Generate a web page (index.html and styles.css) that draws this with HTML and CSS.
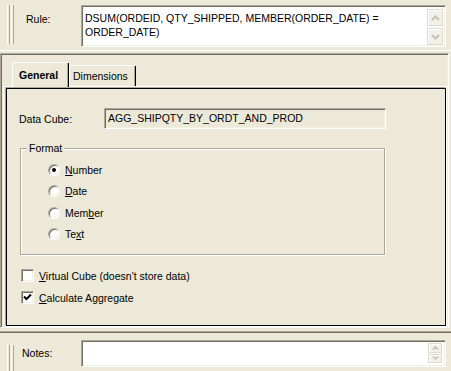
FILE: index.html
```html
<!DOCTYPE html>
<html lang="en">
<head>
    <meta charset="UTF-8">
    <title>Rule</title>
    <link rel="stylesheet" href="styles.css">
</head>
<body>
    <div class="rule-bar">
        <div class="grip"><span></span><span></span></div>
        <div class="bar-label">Rule:</div>
        <div class="memo">
            <div class="memo-text">DSUM(ORDEID, QTY_SHIPPED, MEMBER(ORDER_DATE) = ORDER_DATE)</div>
            <div class="vscroll">
                <div class="sbtn">
                    <svg width="9" height="6" viewBox="0 0 9 6"><path d="M1 5 L4.5 1.5 L8 5" fill="none" stroke="#c6c3b4" stroke-width="2"/></svg>
                </div>
                <div class="sbtn">
                    <svg width="9" height="6" viewBox="0 0 9 6"><path d="M1 1 L4.5 4.5 L8 1" fill="none" stroke="#c6c3b4" stroke-width="2"/></svg>
                </div>
            </div>
        </div>
    </div>

    <div class="main-panel">
        <div class="tabs">
            <div class="tab active">General</div>
            <div class="tab">Dimensions</div>
        </div>
        <div class="tab-page">
            <div class="frame">
                <div class="field-row">
                    <div class="field-label">Data Cube:</div>
                    <div class="readonly-box">AGG_SHIPQTY_BY_ORDT_AND_PROD</div>
                </div>

                <div class="groupbox">
                    <div class="legend">Format</div>
                    <div class="option"><span class="radio checked"></span><span><u>N</u>umber</span></div>
                    <div class="option"><span class="radio"></span><span><u>D</u>ate</span></div>
                    <div class="option"><span class="radio"></span><span>Mem<u>b</u>er</span></div>
                    <div class="option"><span class="radio"></span><span>Te<u>x</u>t</span></div>
                </div>

                <div class="checks">
                    <div class="option"><span class="check"></span><span><u>V</u>irtual Cube (doesn't store data)</span></div>
                    <div class="option">
                        <span class="check">
                            <svg width="9" height="9" viewBox="0 0 9 9"><path d="M1 3.5 L3.5 6 L8 1.5" fill="none" stroke="#000" stroke-width="2"/></svg>
                        </span>
                        <span><u>C</u>alculate Aggregate</span>
                    </div>
                </div>
            </div>
        </div>
    </div>

    <div class="notes-bar">
        <div class="grip short"><span></span><span></span></div>
        <div class="bar-label notes-label">Notes:</div>
        <div class="memo notes-memo">
            <div class="memo-text"></div>
            <div class="vscroll small">
                <div class="sbtn">
                    <svg width="7" height="4" viewBox="0 0 7 4"><path d="M1 3.5 L3.5 1 L6 3.5" fill="none" stroke="#c6c3b4" stroke-width="1.6"/></svg>
                </div>
                <div class="sbtn">
                    <svg width="7" height="4" viewBox="0 0 7 4"><path d="M1 0.5 L3.5 3 L6 0.5" fill="none" stroke="#c6c3b4" stroke-width="1.6"/></svg>
                </div>
            </div>
        </div>
    </div>
</body>
</html>
```

FILE: styles.css
```css
* {
    margin: 0;
    padding: 0;
    box-sizing: border-box;
}

body {
    width: 451px;
    height: 371px;
    overflow: hidden;
    background: #ece9d8;
    font-family: "Liberation Sans", Arial, sans-serif;
    font-size: 10.5px;
    color: #000;
}

u {
    text-decoration: underline;
    text-underline-offset: 1px;
}

/* top rule area */
.rule-bar {
    height: 51px;
    display: flex;
    align-items: flex-start;
    padding-top: 5px;
    border-bottom: 1px solid #fff;
}

.grip {
    display: flex;
    gap: 1px;
    margin-left: 7px;
    height: 39px;
}

.grip span {
    width: 3px;
    height: 100%;
    border-left: 1px solid #fff;
    border-right: 1px solid #aca899;
}

.grip.short {
    height: 28px;
    margin-top: 5px;
}

.bar-label {
    width: 55px;
    margin-left: 12px;
    padding-top: 8px;
}

.memo {
    width: 365px;
    height: 42px;
    display: flex;
    background: #fff;
    border: 1px solid;
    border-color: #aca899 #fff #fff #aca899;
    box-shadow: inset 1px 1px 0 #716f64, inset -1px -1px 0 #f1efe2;
}

.memo-text {
    flex: 1;
    padding: 5px 0 0 3px;
    line-height: 14px;
}

.vscroll {
    width: 16px;
    margin: 3px 2px 1px 0;
    display: flex;
    flex-direction: column;
    justify-content: space-between;
    background: #fbfbf8;
}

.sbtn {
    height: 17px;
    display: flex;
    align-items: center;
    justify-content: center;
    background: #f1f0ea;
    border: 1px solid #dedbd0;
    box-shadow: inset 1px 1px 0 #fff;
}

/* main tabbed panel */
.main-panel {
    margin-top: 2px;
    width: 449px;
    height: 275px;
    border: 1px solid;
    border-color: #aca899 #fff #fff #aca899;
    box-shadow: inset 1px 1px 0 #716f64, inset -1px -1px 0 #f1efe2;
    padding: 1px;
}

.tabs {
    height: 31px;
    display: flex;
    align-items: flex-end;
    padding-left: 10px;
}

.tab {
    height: 21px;
    padding: 4px 0 0 3px;
    width: 67px;
    border: 1px solid;
    border-bottom: none;
    border-color: #fff #000 transparent #fff;
    border-radius: 2px 2px 0 0;
    box-shadow: inset -1px 0 0 #aca899;
}

.tab.active {
    height: 25px;
    width: 57px;
    padding: 6px 0 0 6px;
    font-weight: bold;
    margin-bottom: -1px;
    background: #ece9d8;
    position: relative;
}

.tab-page {
    height: 240px;
    margin-left: 1px;
    border-top: 1px solid #fff;
    border-left: 1px solid #fff;
    padding: 1px 0 0 2px;
}

.frame {
    width: 440px;
    height: 238px;
    border: 1px solid #000;
    box-shadow: -1px -1px 0 #aca899, 1px 1px 0 #fff;
    padding: 19px 0 0 12px;
}

.field-row {
    display: flex;
    align-items: center;
}

.field-label {
    width: 85px;
}

.readonly-box {
    width: 282px;
    height: 21px;
    padding: 3px 0 0 3px;
    border: 1px solid;
    border-color: #aca899 #fff #fff #aca899;
    box-shadow: inset 1px 1px 0 #716f64, inset -1px -1px 0 #f1efe2;
}

.groupbox {
    position: relative;
    margin: 19px 0 0 1px;
    width: 365px;
    height: 107px;
    border: 1px solid #aca899;
    box-shadow: inset 1px 1px 0 #fff, 1px 1px 0 #fff;
    padding: 14px 0 0 27px;
    display: flex;
    flex-direction: column;
    gap: 8.5px;
}

.legend {
    position: absolute;
    top: -7px;
    left: 6px;
    padding: 0 2px;
    background: #ece9d8;
}

.option {
    display: flex;
    align-items: center;
    gap: 5px;
    height: 13px;
}

.radio {
    width: 12px;
    height: 12px;
    border-radius: 50%;
    background: #fff;
    border: 1px solid;
    border-color: #aca899 #fff #fff #aca899;
    box-shadow: inset 1px 1px 0 #716f64, inset -1px -1px 0 #f1efe2;
    display: flex;
    align-items: center;
    justify-content: center;
}

.radio.checked::after {
    content: "";
    width: 4px;
    height: 4px;
    border-radius: 50%;
    background: #000;
}

.checks {
    margin: 14px 0 0 2px;
    display: flex;
    flex-direction: column;
    gap: 9px;
}

.check {
    width: 13px;
    height: 13px;
    background: #fff;
    border: 1px solid;
    border-color: #aca899 #fff #fff #aca899;
    box-shadow: inset 1px 1px 0 #716f64, inset -1px -1px 0 #f1efe2;
    display: flex;
    align-items: center;
    justify-content: center;
}

/* notes area */
.notes-bar {
    margin-top: 3px;
    height: 40px;
    display: flex;
    align-items: flex-start;
    border-top: 1px solid #aca899;
    box-shadow: inset 0 1px 0 #716f64;
    padding-top: 8px;
}

.notes-label {
    width: 59px;
    margin-left: 8px;
    padding-top: 7px;
}

.notes-memo {
    height: 27px;
}

.vscroll.small {
    width: 14px;
    margin: 2px 3px 3px 0;
    gap: 1px;
}

.vscroll.small .sbtn {
    height: 10px;
}
```
